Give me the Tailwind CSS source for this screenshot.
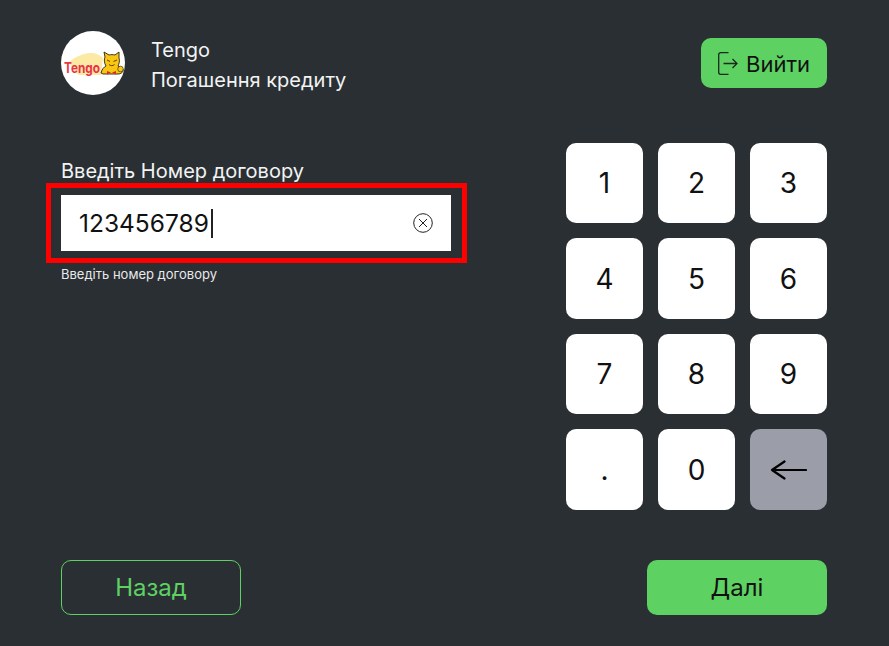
<!DOCTYPE html>
<html>
<head>
<meta charset="utf-8">
<title>Tengo</title>
<script src="https://cdn.jsdelivr.net/npm/@tailwindcss/browser@4"></script>
</head>
<body class="bg-[#2a2f34] font-['Inter','Liberation_Sans',sans-serif] text-white">
<div class="w-[889px] h-[646px] pl-[61px] pr-[62px] pt-[31px] flex flex-col overflow-hidden">
  <!-- header -->
  <div class="flex justify-between h-[64px]">
    <div class="flex items-center">
      <div class="w-[64px] h-[64px] rounded-full bg-white overflow-hidden">
        <svg viewBox="0 0 64 64" width="64" height="64">
          <path d="M8 31C14 26 22 22 30 22C35 22 39 24 42 27L40 44H18C14 41 10 36 8 31Z" fill="#fbe9a4"/>
          <path d="M40 42C41 38 43 36 45 35C43 32 43 28 44 26L43 21L48 24C50 23.500 52 23.500 54 24L58 21L58 27C59 30 58 33 57 35C59 36 61 37 62 38C63 41 60 43 57 43H42Z" fill="#f9c712" stroke="#2a1f0c" stroke-width=".9" stroke-linejoin="round"/>
          <path d="M46 29L49 30.500M52.500 30.500L56 29M48 33.500C49.500 35 52 35 53.500 33.500" stroke="#4a3008" stroke-width=".9" fill="none"/>
          <path d="M46 40L50 41.500L46 43.500ZM55 40L51 41.500L55 43.500Z" fill="#e5262f"/>
          <circle cx="59.500" cy="38" r="2.800" fill="#f9c712" stroke="#2a1f0c" stroke-width=".6"/>
          <text x="3" y="41.500" font-family="Inter, sans-serif" font-size="14" font-weight="700" fill="#ea3248" textLength="36" lengthAdjust="spacingAndGlyphs">Tengo</text>
        </svg>
      </div>
      <div class="ml-[26px] pt-[4px] text-[20px] leading-[30px] text-[#f2f3f3]">
        <div>Tengo</div>
        <div>Погашення кредиту</div>
      </div>
    </div>
    <button class="mt-[7px] w-[126px] h-[50px] rounded-[10px] bg-[#5ed163] text-[#111] text-[22px] flex items-center justify-center gap-[8px]">
      <svg width="20" height="23" viewBox="0 0 20 23" fill="none" stroke="#1b2a1d" stroke-width="1.300">
        <path d="M10.500 .7H2.700C1.600 .7 .7 1.600 .7 2.700V20.300C.7 21.400 1.600 22.300 2.700 22.300H10.500"/>
        <path d="M5.500 11.500H19M14.500 7L19 11.500L14.500 16"/>
      </svg>
      <span class="pt-[2px]">Вийти</span>
    </button>
  </div>

  <!-- main -->
  <div class="flex justify-between mt-[47.750px]">
    <div class="w-[390px] pt-[14.250px]">
      <div class="text-[20px] leading-[28px] text-[#f2f3f3]">Введіть Номер договору</div>
      <div class="-ml-[15px] -mr-[16px] mt-[-2px] border-[5px] border-[#ff0000] py-[7px] pl-[10px] pr-[11px]">
        <div class="bg-white h-[56px] flex items-center justify-between pl-[18px] pr-[18px] text-[#111]">
          <div class="flex items-center text-[24.500px]">
            <span>123456789</span>
            <span class="w-[2px] h-[29px] bg-[#222] ml-[2px]"></span>
          </div>
          <svg width="20" height="20" viewBox="0 0 20 20" fill="none" stroke="#222" stroke-width="1">
            <circle cx="10" cy="10" r="9.300"/>
            <path d="M6 6L14 14M14 6L6 14"/>
          </svg>
        </div>
      </div>
      <div class="mt-[3px] text-[13px] leading-[16px] text-[#e8e9ea]">Введіть номер договору</div>
    </div>

    <div class="grid grid-cols-[77px_77px_77px] auto-rows-[80.500px] gap-[15px] text-[28px] text-[#111]">
      <button class="bg-white rounded-[10px]">1</button>
      <button class="bg-white rounded-[10px]">2</button>
      <button class="bg-white rounded-[10px]">3</button>
      <button class="bg-white rounded-[10px]">4</button>
      <button class="bg-white rounded-[10px]">5</button>
      <button class="bg-white rounded-[10px]">6</button>
      <button class="bg-white rounded-[10px]">7</button>
      <button class="bg-white rounded-[10px]">8</button>
      <button class="bg-white rounded-[10px]">9</button>
      <button class="bg-white rounded-[10px]">.</button>
      <button class="bg-white rounded-[10px]">0</button>
      <button class="bg-[#9b9da9] rounded-[10px] flex items-center justify-center">
        <svg width="37" height="20" viewBox="0 0 37 20" fill="none" stroke="#000" stroke-width="2.200" stroke-linecap="round" stroke-linejoin="round">
          <path d="M36 10H2M14.500 1.500L2 10L14.500 18.500"/>
        </svg>
      </button>
    </div>
  </div>

  <!-- footer -->
  <div class="flex justify-between mt-[50.250px]">
    <button class="w-[180px] h-[55px] rounded-[10px] border border-[#5ed163] text-[#5ed163] text-[24px]">Назад</button>
    <button class="w-[180px] h-[55px] rounded-[10px] bg-[#5ed163] text-[#111] text-[24px]">Далі</button>
  </div>
</div>
</body>
</html>
